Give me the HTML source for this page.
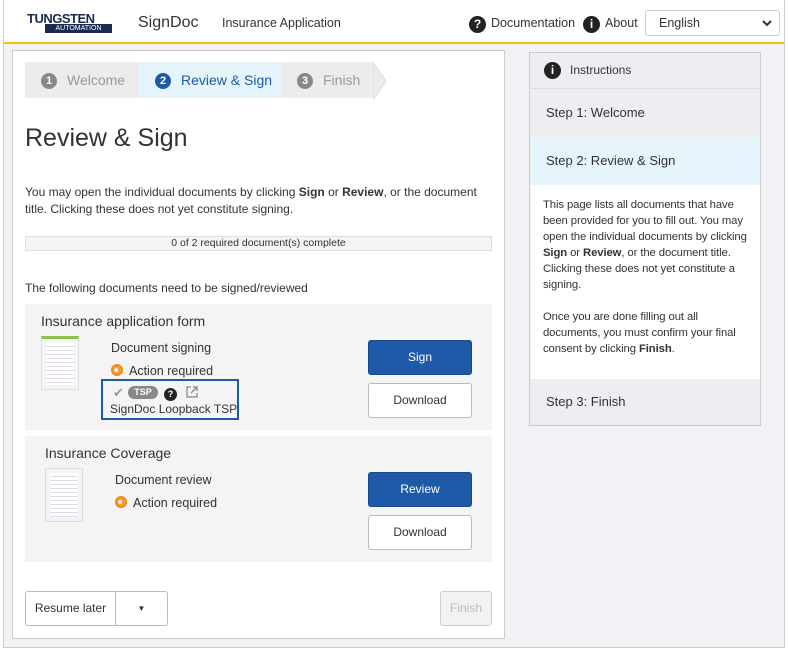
<!DOCTYPE html>
<html><head><meta charset="utf-8"><style>
*{box-sizing:border-box;margin:0;padding:0}
body{width:788px;height:650px;background:#fff;font-family:"Liberation Sans",sans-serif;color:#333;position:relative;overflow:hidden;font-size:12px}
.a{position:absolute}
.frame{left:3px;top:0;width:782px;height:648px;border:1px solid #ccc;border-top:none;background:#f2f2f6}
.hdr{left:4px;top:0;width:780px;height:44px;background:#fff;border-bottom:2px solid #f5c400}
.ic{display:inline-block;width:17px;height:17px;border-radius:50%;background:#222;color:#fff;font-weight:bold;font-size:12px;text-align:center;line-height:17px}
.btn{border:1px solid #bbb;border-radius:3px;background:#fff;text-align:center;font-size:12px;color:#333}
.pri{background:#1e5aa8;border-color:#174a8c;color:#fff}
.card{background:#f4f4f4}
.step{position:absolute;height:36px;top:0;line-height:36px;font-size:14px}
.num{display:inline-block;width:16px;height:16px;border-radius:50%;background:#888;color:#fff;font-size:11px;font-weight:bold;line-height:16px;text-align:center;margin-right:10px;vertical-align:1px}
.ar{display:inline-block;width:12px;height:12px;border-radius:50%;border:2px solid #f08a1c;background:radial-gradient(circle at 40% 50%,#fff 30%,#f5a030 32%);vertical-align:-1px;margin-right:6px}
.thumb{background:repeating-linear-gradient(#fff 0 3px,#dde 3px 4px);border:1px solid #ddd;background-clip:content-box;padding:4px}
.rs{left:531px;width:229px;font-size:13px;padding-left:15px}
</style></head><body>
<div class="a frame"></div>
<div class="a hdr"></div>
<div class="a" style="left:27px;top:13px;width:85px;font:bold 13px 'Liberation Sans';color:#1a2a50;letter-spacing:-0.5px;line-height:11px">TUNGSTEN</div>
<div class="a" style="left:45px;top:24px;width:67px;height:9px;background:#1a2a50;color:#fff;font-size:7px;line-height:9px;text-align:center">AUTOMATION</div>
<div class="a" style="left:138px;top:14px;font-size:16px;color:#333">SignDoc</div>
<div class="a" style="left:222px;top:16px;font-size:12.5px;color:#333">Insurance Application</div>
<div class="a" style="left:469px;top:16px"><span class="ic">?</span></div>
<div class="a" style="left:491px;top:16px;font-size:12.5px">Documentation</div>
<div class="a" style="left:583px;top:16px"><span class="ic">i</span></div>
<div class="a" style="left:605px;top:16px;font-size:12.5px">About</div>
<div class="a" style="left:645px;top:10px;width:135px;height:26px;border:1px solid #ccc;border-radius:3px;background:#fff;padding:5px 13px;font-size:12.5px">English<svg style="position:absolute;right:7px;top:9px" width="10" height="7"><path d="M1 1L5 5L9 1" fill="none" stroke="#333" stroke-width="2"/></svg></div>

<div class="a" style="left:12px;top:50px;width:493px;height:589px;background:#fff;border:1px solid #ccc"></div>
<div class="a" style="left:25px;top:62px;width:360px;height:38px">
 <div class="step" style="left:0;width:114px;background:#ececec;color:#999;padding-left:16px"><span class="num">1</span>Welcome</div>
 <div class="step" style="left:114px;width:142px;background:#e6f4fc;color:#1e5aa8;padding-left:16px"><span class="num" style="background:#1e5aa8">2</span>Review &amp; Sign</div>
 <div class="step" style="left:256px;width:92px;background:#ececec;color:#999;padding-left:16px"><span class="num">3</span>Finish</div>
 <svg class="a" style="left:348px;top:0" width="14" height="38"><path d="M0 0L13 19L0 38Z" fill="#ececec" stroke="#ddd"/></svg>
</div>
<div class="a" style="left:25px;top:124px;font-size:25px;color:#333">Review &amp; Sign</div>
<div class="a" style="left:25px;top:184px;width:460px;font-size:12px;line-height:17px">You may open the individual documents by clicking <b>Sign</b> or <b>Review</b>, or the document title. Clicking these does not yet constitute signing.</div>
<div class="a" style="left:25px;top:236px;width:467px;height:15px;background:#f4f4f4;border:1px solid #e0e0e0;font-size:10.5px;text-align:center;line-height:13px">0 of 2 required document(s) complete</div>
<div class="a" style="left:25px;top:281px;font-size:12px">The following documents need to be signed/reviewed</div>

<div class="a card" style="left:25px;top:304px;width:467px;height:126px"></div>
<div class="a" style="left:41px;top:313px;font-size:14px">Insurance application form</div>
<div class="a thumb" style="left:41px;top:336px;width:38px;height:54px;border-top:3px solid #8bc34a"></div>
<div class="a" style="left:111px;top:341px;font-size:12.5px">Document signing</div>
<div class="a" style="left:111px;top:364px;font-size:12.5px"><span class="ar"></span>Action required</div>
<div class="a" style="left:101px;top:379px;width:138px;height:41px;border:2px solid #1e5aa8"></div>
<div class="a" style="left:113px;top:385px;color:#999;font-size:13px">&#10004;</div>
<div class="a" style="left:128px;top:386px;width:30px;height:13px;border-radius:7px;background:#888;color:#fff;font-size:9px;font-weight:bold;text-align:center;line-height:13px">TSP</div>
<div class="a" style="left:164px;top:386px"><span class="ic" style="width:13px;height:13px;line-height:13px;font-size:9px">?</span></div>
<svg class="a" style="left:186px;top:386px" width="12" height="12"><path d="M5 1H1V11H11V7M7 1H11V5M11 1L5 7" fill="none" stroke="#888" stroke-width="1.3"/></svg>
<div class="a" style="left:110px;top:402px;font-size:12px">SignDoc Loopback TSP</div>
<div class="a btn pri" style="left:368px;top:340px;width:104px;height:35px;line-height:33px">Sign</div>
<div class="a btn" style="left:368px;top:383px;width:104px;height:35px;line-height:33px">Download</div>

<div class="a card" style="left:25px;top:436px;width:467px;height:126px"></div>
<div class="a" style="left:45px;top:445px;font-size:14px">Insurance Coverage</div>
<div class="a thumb" style="left:45px;top:468px;width:38px;height:54px"></div>
<div class="a" style="left:115px;top:473px;font-size:12.5px">Document review</div>
<div class="a" style="left:115px;top:496px;font-size:12.5px"><span class="ar"></span>Action required</div>
<div class="a btn pri" style="left:368px;top:472px;width:104px;height:35px;line-height:33px">Review</div>
<div class="a btn" style="left:368px;top:515px;width:104px;height:35px;line-height:33px">Download</div>

<div class="a btn" style="left:25px;top:591px;width:91px;height:35px;line-height:33px;border-radius:3px 0 0 3px">Resume later</div>
<div class="a btn" style="left:115px;top:591px;width:53px;height:35px;line-height:33px;border-radius:0 3px 3px 0;font-size:8px">&#9660;</div>
<div class="a btn" style="left:440px;top:591px;width:52px;height:35px;line-height:33px;background:#f2f2f2;color:#bbb;border-color:#ccc">Finish</div>

<div class="a" style="left:529px;top:52px;width:232px;height:374px;border:1px solid #ccc;background:#eeeef2"></div>
<div class="a" style="left:544px;top:62px"><span class="ic">i</span></div>
<div class="a" style="left:570px;top:63px;font-size:12px">Instructions</div>
<div class="a rs" style="top:88px;height:48px;line-height:48px;background:#ededf2;border-top:1px solid #ddd">Step 1: Welcome</div>
<div class="a rs" style="top:137px;height:48px;line-height:48px;background:#e6f4fc">Step 2: Review &amp; Sign</div>
<div class="a rs" style="top:185px;height:194px;background:#fff;font-size:11.3px;line-height:16px;padding:12px 8px 0 12px;letter-spacing:-0.1px">This page lists all documents that have been provided for you to fill out. You may open the individual documents by clicking <b>Sign</b> or <b>Review</b>, or the document title. Clicking these does not yet constitute a signing.<br><br>Once you are done filling out all documents, you must confirm your final consent by clicking <b>Finish</b>.</div>
<div class="a rs" style="top:379px;height:46px;line-height:46px;background:#ededf2">Step 3: Finish</div>
</body></html>
